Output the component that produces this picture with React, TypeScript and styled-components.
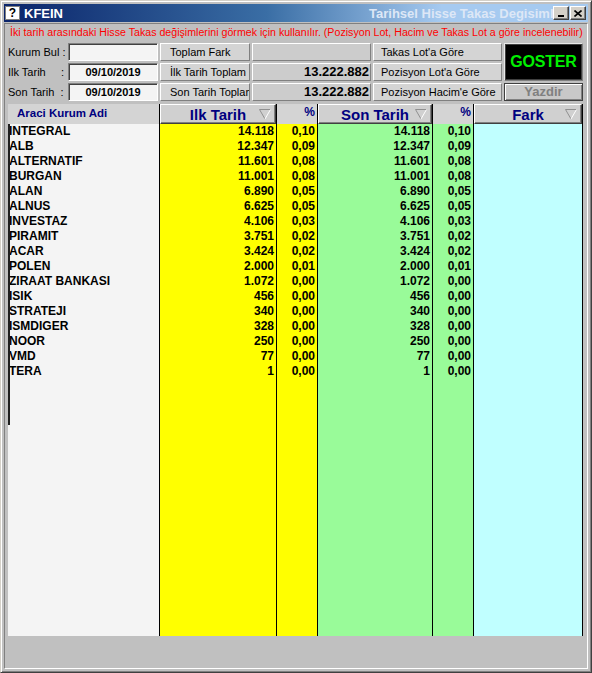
import styled, { createGlobalStyle } from "styled-components"

const GlobalStyle = createGlobalStyle`
  html, body {
    margin: 0;
    padding: 0;
    background: #c0c0c0;
  }
  * {
    box-sizing: border-box;
  }
`

const FONT = `"Liberation Sans", Arial, sans-serif`

interface Row {
  name: string
  lot: string
  pct: string
}

const rows: Row[] = [
  { name: "INTEGRAL", lot: "14.118", pct: "0,10" },
  { name: "ALB", lot: "12.347", pct: "0,09" },
  { name: "ALTERNATIF", lot: "11.601", pct: "0,08" },
  { name: "BURGAN", lot: "11.001", pct: "0,08" },
  { name: "ALAN", lot: "6.890", pct: "0,05" },
  { name: "ALNUS", lot: "6.625", pct: "0,05" },
  { name: "INVESTAZ", lot: "4.106", pct: "0,03" },
  { name: "PIRAMIT", lot: "3.751", pct: "0,02" },
  { name: "ACAR", lot: "3.424", pct: "0,02" },
  { name: "POLEN", lot: "2.000", pct: "0,01" },
  { name: "ZIRAAT BANKASI", lot: "1.072", pct: "0,00" },
  { name: "ISIK", lot: "456", pct: "0,00" },
  { name: "STRATEJI", lot: "340", pct: "0,00" },
  { name: "ISMDIGER", lot: "328", pct: "0,00" },
  { name: "NOOR", lot: "250", pct: "0,00" },
  { name: "VMD", lot: "77", pct: "0,00" },
  { name: "TERA", lot: "1", pct: "0,00" },
]

const Window = styled.div`
  width: 592px;
  height: 673px;
  background: #c0c0c0;
  border: 1px solid;
  border-color: #d4d0c8 #404040 #404040 #d4d0c8;
  box-shadow: inset 1px 1px #ffffff, inset -1px -1px #808080;
  padding: 3px;
  display: flex;
  flex-direction: column;
  font-family: ${FONT};
`

const TitleBar = styled.div`
  height: 18px;
  display: flex;
  align-items: center;
  padding: 0 2px 0 1px;
  background: linear-gradient(to right, #0a246a 0%, #3a6ea5 45%, #a6caf0 75%);
`

const HelpIcon = styled.span`
  width: 15px;
  height: 14px;
  background: #ffffff;
  border: 1px solid #808080;
  color: #000;
  font: bold 12px ${FONT};
  line-height: 12px;
  text-align: center;
`

const AppName = styled.span`
  color: #ffffff;
  font: bold 13px ${FONT};
  margin-left: 4px;
`

const Caption = styled.span`
  flex: 1;
  overflow: hidden;
  white-space: nowrap;
  color: #dde7f6;
  font: bold 13px ${FONT};
  padding-left: 306px;
`

const CaptionButtons = styled.div`
  display: flex;
  gap: 1px;
`

const CapBtn = styled.div`
  width: 16px;
  height: 14px;
  background: #d4d0c8;
  border: 1px solid;
  border-color: #ffffff #404040 #404040 #ffffff;
  box-shadow: inset -1px -1px #808080;
  display: flex;
  align-items: center;
  justify-content: center;
`

const Body = styled.div`
  flex: 1;
  margin-top: 1px;
  border: 1px solid;
  border-color: #808080 #ffffff #ffffff #808080;
  display: flex;
  flex-direction: column;
  padding: 0 3px;
`

const Hint = styled.div`
  height: 16px;
  line-height: 16px;
  padding-left: 2px;
  color: #ff0000;
  font-size: 10.65px;
  white-space: nowrap;
  margin-bottom: 3px;
`

const Controls = styled.div`
  display: grid;
  grid-template-columns: 58px 90px 90px 119px 129px 79px;
  grid-template-rows: repeat(3, 18px);
  column-gap: 2px;
  row-gap: 2px;
  margin-bottom: 3px;
`

const Label = styled.div`
  font-size: 11px;
  line-height: 18px;
  color: #000;
  white-space: pre;
`

const Field = styled.div`
  background: #f4f4f4;
  border: 1px solid;
  border-color: #808080 #ffffff #ffffff #808080;
  box-shadow: inset 1px 1px #404040;
  font: bold 11px ${FONT};
  line-height: 16px;
  text-align: center;
  color: #000;
`

const PlainButton = styled.div<{ $pad: number }>`
  background: #d4d4d4;
  border: 1px solid;
  border-color: #ffffff #808080 #808080 #ffffff;
  font-size: 11px;
  line-height: 16px;
  padding-left: ${({ $pad }) => $pad}px;
  white-space: nowrap;
  overflow: hidden;
  color: #000;
`

const ValueBox = styled.div`
  background: #cccccc;
  border: 1px solid;
  border-color: #ffffff #808080 #808080 #ffffff;
  font: bold 13px ${FONT};
  line-height: 16px;
  text-align: right;
  padding-right: 1px;
  color: #000;
`

const ShowButton = styled.div`
  grid-row: 1 / span 2;
  grid-column: 6;
  background: #000;
  border: 1px solid;
  border-color: #e8e8e8 #808080 #808080 #e8e8e8;
  box-shadow: inset 1px 1px #404040, inset -1px -1px #404040;
  color: #00f000;
  font: bold 16px ${FONT};
  display: flex;
  align-items: center;
  justify-content: center;
  letter-spacing: -0.2px;
`

const PrintButton = styled.div`
  background: #c8c8c8;
  border: 1px solid #404040;
  box-shadow: inset 1px 1px #ffffff, inset -1px -1px #808080;
  color: #808080;
  font: bold 13px ${FONT};
  line-height: 16px;
  text-align: center;
`

const Grid = styled.div`
  height: 532px;
  display: flex;
`

const Column = styled.div<{ $w: number; $bg: string; $last?: boolean }>`
  width: ${({ $w }) => $w}px;
  background: ${({ $bg }) => $bg};
  border-left: 1px solid #000;
  border-right: ${({ $last }) => ($last ? "1px solid #000" : "none")};
  display: flex;
  flex-direction: column;
`

const NameColumn = styled.div`
  width: 151px;
  background: #f4f4f4;
  display: flex;
  flex-direction: column;
`

const NameBody = styled.div`
  flex: 1;
  position: relative;
  &::before {
    content: "";
    position: absolute;
    left: 0;
    top: 0;
    width: 2px;
    height: 301px;
    background: #202020;
  }
`

const FlatHeader = styled.div<{ $align: "left" | "right" }>`
  height: 20px;
  background: #d4d4d4;
  color: #000080;
  font: bold ${({ $align }) => ($align === "left" ? "11.5px" : "12px")} ${FONT};
  line-height: ${({ $align }) => ($align === "left" ? "19px" : "16px")};
  text-align: ${({ $align }) => $align};
  padding: ${({ $align }) => ($align === "left" ? "0 0 0 9px" : "0 2px 0 0")};
  white-space: nowrap;
`

const SortHeader = styled.div`
  height: 20px;
  background: #d0d0d0;
  border: 1px solid;
  border-color: #ffffff #404040 #404040 #ffffff;
  box-shadow: inset -1px -1px #808080;
  display: grid;
  grid-template-columns: 16px 1fr 16px;
  align-items: center;
  color: #000080;
  font: bold 15px ${FONT};
`

const SortTitle = styled.span`
  text-align: center;
  line-height: 17px;
  white-space: nowrap;
`

const Cell = styled.div<{ $align?: "left" | "right" }>`
  height: 15px;
  line-height: 15px;
  font: bold 12px ${FONT};
  color: #000;
  white-space: nowrap;
  text-align: ${({ $align }) => $align ?? "right"};
  padding: ${({ $align }) => ($align === "left" ? "0 0 0 1px" : "0 2px 0 0")};
`

const SortArrow = () => (
  <svg width="12" height="11" viewBox="0 0 12 11">
    <polyline points="6,10 0.5,0.5 11.5,0.5" fill="none" stroke="#909090" />
    <line x1="11.5" y1="0.5" x2="6" y2="10" stroke="#ffffff" />
  </svg>
)

const MinGlyph = () => (
  <svg width="8" height="8" viewBox="0 0 8 8">
    <rect x="1" y="6" width="6" height="2" fill="#000" />
  </svg>
)

const CloseGlyph = () => (
  <svg width="8" height="7" viewBox="0 0 8 7">
    <path d="M0.5 0.5 L7.5 6.5 M7.5 0.5 L0.5 6.5" stroke="#000" strokeWidth="1.6" />
  </svg>
)

export default function App() {
  return (
    <>
      <GlobalStyle />
      <Window>
        <TitleBar>
          <HelpIcon>?</HelpIcon>
          <AppName>KFEIN</AppName>
          <Caption>Tarihsel Hisse Takas Degisimleri</Caption>
          <CaptionButtons>
            <CapBtn>
              <MinGlyph />
            </CapBtn>
            <CapBtn>
              <CloseGlyph />
            </CapBtn>
          </CaptionButtons>
        </TitleBar>
        <Body>
          <Hint>
            İki tarih arasındaki Hisse Takas değişimlerini görmek için kullanılır. (Pozisyon Lot, Hacim ve Takas Lot a göre incelenebilir)
          </Hint>
          <Controls>
            <Label>Kurum Bul :</Label>
            <Field />
            <PlainButton $pad={9}>Toplam Fark</PlainButton>
            <ValueBox />
            <PlainButton $pad={7}>Takas Lot'a Göre</PlainButton>
            <ShowButton>GOSTER</ShowButton>

            <Label>{"Ilk Tarih     :"}</Label>
            <Field>09/10/2019</Field>
            <PlainButton $pad={9}>İlk Tarih Toplam</PlainButton>
            <ValueBox>13.222.882</ValueBox>
            <PlainButton $pad={7}>Pozisyon Lot'a Göre</PlainButton>

            <Label>{"Son Tarih  :"}</Label>
            <Field>09/10/2019</Field>
            <PlainButton $pad={9}>Son Tarih Toplam</PlainButton>
            <ValueBox>13.222.882</ValueBox>
            <PlainButton $pad={7}>Pozisyon Hacim'e Göre</PlainButton>
            <PrintButton>Yazdir</PrintButton>
          </Controls>

          <Grid>
            <NameColumn>
              <FlatHeader $align="left">Araci Kurum Adi</FlatHeader>
              <NameBody>
                {rows.map((r) => (
                  <Cell key={r.name} $align="left">
                    {r.name}
                  </Cell>
                ))}
              </NameBody>
            </NameColumn>

            <Column $w={117} $bg="#ffff00">
              <SortHeader>
                <span />
                <SortTitle>Ilk Tarih</SortTitle>
                <SortArrow />
              </SortHeader>
              {rows.map((r) => (
                <Cell key={r.name}>{r.lot}</Cell>
              ))}
            </Column>

            <Column $w={41} $bg="#ffff00">
              <FlatHeader $align="right">%</FlatHeader>
              {rows.map((r) => (
                <Cell key={r.name}>{r.pct}</Cell>
              ))}
            </Column>

            <Column $w={115} $bg="#99fb99">
              <SortHeader>
                <span />
                <SortTitle>Son Tarih</SortTitle>
                <SortArrow />
              </SortHeader>
              {rows.map((r) => (
                <Cell key={r.name}>{r.lot}</Cell>
              ))}
            </Column>

            <Column $w={41} $bg="#99fb99">
              <FlatHeader $align="right">%</FlatHeader>
              {rows.map((r) => (
                <Cell key={r.name}>{r.pct}</Cell>
              ))}
            </Column>

            <Column $w={110} $bg="#c0ffff" $last>
              <SortHeader>
                <span />
                <SortTitle>Fark</SortTitle>
                <SortArrow />
              </SortHeader>
            </Column>
          </Grid>
        </Body>
      </Window>
    </>
  )
}
